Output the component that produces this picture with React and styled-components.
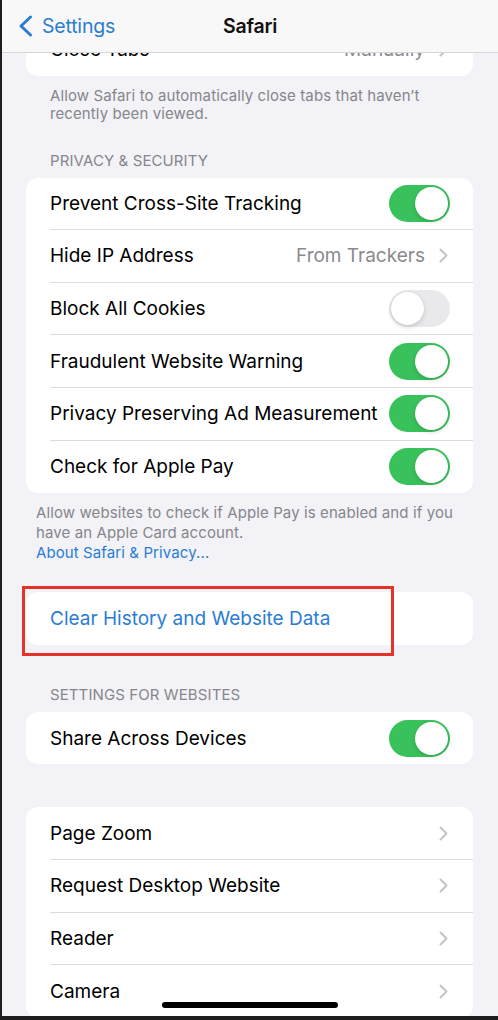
import React from "react";
import styled, { createGlobalStyle } from "styled-components";

const GlobalStyle = createGlobalStyle`
  html, body {
    margin: 0;
    padding: 0;
    background: #1e1e1f;
  }
  * {
    box-sizing: border-box;
  }
`;

const Frame = styled.div`
  width: 498px;
  height: 1020px;
  padding-left: 2px;
  padding-bottom: 4px;
  background: #1e1e1f;
`;

const Screen = styled.div`
  position: relative;
  height: 100%;
  display: flex;
  flex-direction: column;
  overflow: hidden;
  background: #f2f2f7;
  font-family: Inter, "Noto Sans", sans-serif;
  -webkit-font-smoothing: antialiased;
`;

const NavBar = styled.div`
  flex: none;
  position: relative;
  z-index: 2;
  height: 53px;
  display: flex;
  align-items: center;
  justify-content: center;
  background: #f8f8f8;
  border-bottom: 1px solid #d6d6d8;
`;

const BackButton = styled.div`
  position: absolute;
  left: 16px;
  top: 0;
  bottom: 0;
  display: flex;
  align-items: center;
  gap: 9px;
  color: #2a7dd3;
  font-size: 19.5px;
  letter-spacing: -0.2px;
`;

const Title = styled.div`
  font-size: 19.5px;
  font-weight: 600;
  color: #111;
  letter-spacing: -0.2px;
`;

const Scroller = styled.div`
  flex: 1;
  overflow: hidden;
`;

const Content = styled.div`
  margin-top: -30px;
`;

const Card = styled.div`
  margin: ${(p) => p.$top || 0}px 25px 0 24px;
  background: #fff;
  border-radius: 12px;
  overflow: hidden;
`;

const Row = styled.div`
  display: flex;
  align-items: center;
  min-height: 52.6px;
  margin-left: 24px;
  padding-right: 23px;
  border-bottom: 1px solid #dcdcde;
  &:last-child {
    border-bottom: none;
  }
`;

const Label = styled.div`
  flex: 1;
  font-size: 19px;
  color: ${(p) => (p.$link ? "#2a7dd3" : "#000")};
`;

const Value = styled.div`
  font-size: 19px;
  color: #8a8a8e;
  margin-right: 14px;
`;

const Footer = styled.div`
  padding: ${(p) => p.$top}px 30px 0 ${(p) => p.$indent}px;
  font-size: 15px;
  line-height: ${(p) => p.$line}px;
  color: #86868b;
  letter-spacing: 0.1px;
`;

const FooterLink = styled.div`
  color: #2a7dd3;
`;

const SectionHeader = styled.div`
  padding: ${(p) => p.$top}px 0 0 48px;
  margin-bottom: 8px;
  font-size: 15px;
  line-height: 18px;
  color: #86868b;
  letter-spacing: 0.1px;
`;

const Highlight = styled.div`
  position: relative;
`;

const RedBox = styled.div`
  position: absolute;
  left: 20px;
  top: -6px;
  width: 372px;
  height: 70px;
  border: 3px solid #e6322a;
  pointer-events: none;
`;

const Track = styled.div`
  flex: none;
  position: relative;
  width: 61px;
  height: 37px;
  border-radius: 19px;
  background: ${(p) => (p.$on ? "#39c25c" : "#e9e9eb")};
`;

const Knob = styled.div`
  position: absolute;
  top: 2px;
  left: ${(p) => (p.$on ? "26px" : "2px")};
  width: 33px;
  height: 33px;
  border-radius: 50%;
  background: #fff;
  box-shadow: 0 2px 5px rgba(0, 0, 0, 0.15), 0 0 1px rgba(0, 0, 0, 0.1);
`;

const HomeIndicator = styled.div`
  position: absolute;
  left: 50%;
  bottom: 8px;
  width: 176px;
  height: 6px;
  margin-left: -88px;
  border-radius: 3px;
  background: #000;
  z-index: 3;
`;

const Chevron = () => (
  <svg width="9" height="15" viewBox="0 0 9 15" style={{ marginRight: 2, flex: "none" }}>
    <path d="M1.5 1.5 L7.5 7.5 L1.5 13.5" fill="none" stroke="#c4c4c7" strokeWidth="2" strokeLinecap="round" strokeLinejoin="round" />
  </svg>
);

const BackChevron = () => (
  <svg width="15" height="22" viewBox="0 0 15 22">
    <path d="M12.5 2 L3 11 L12.5 20" fill="none" stroke="#2a7dd3" strokeWidth="3" strokeLinecap="round" strokeLinejoin="round" />
  </svg>
);

const Toggle = ({ on }) => (
  <Track $on={on}>
    <Knob $on={on} />
  </Track>
);

const ToggleRow = ({ label, on }) => (
  <Row>
    <Label>{label}</Label>
    <Toggle on={on} />
  </Row>
);

const LinkRow = ({ label, value }) => (
  <Row>
    <Label>{label}</Label>
    {value && <Value>{value}</Value>}
    <Chevron />
  </Row>
);

export default function App() {
  return (
    <Frame>
      <GlobalStyle />
      <Screen>
        <NavBar>
          <BackButton>
            <BackChevron />
            Settings
          </BackButton>
          <Title>Safari</Title>
        </NavBar>
        <Scroller>
          <Content>
            <Card>
              <LinkRow label="Close Tabs" value="Manually" />
            </Card>
            <Footer $top={11} $indent={48} $line={18}>
              Allow Safari to automatically close tabs that haven’t recently been viewed.
            </Footer>

            <SectionHeader $top={29}>PRIVACY &amp; SECURITY</SectionHeader>
            <Card>
              <ToggleRow label="Prevent Cross-Site Tracking" on />
              <LinkRow label="Hide IP Address" value="From Trackers" />
              <ToggleRow label="Block All Cookies" on={false} />
              <ToggleRow label="Fraudulent Website Warning" on />
              <ToggleRow label="Privacy Preserving Ad Measurement" on />
              <ToggleRow label="Check for Apple Pay" on />
            </Card>
            <Footer $top={10} $indent={34} $line={20}>
              Allow websites to check if Apple Pay is enabled and if you have an Apple Card account.
              <FooterLink>About Safari &amp; Privacy...</FooterLink>
            </Footer>

            <Highlight>
              <Card $top={29}>
                <Row>
                  <Label $link>Clear History and Website Data</Label>
                </Row>
              </Card>
              <RedBox />
            </Highlight>

            <SectionHeader $top={41}>SETTINGS FOR WEBSITES</SectionHeader>
            <Card>
              <ToggleRow label="Share Across Devices" on />
            </Card>

            <Card $top={43}>
              <LinkRow label="Page Zoom" />
              <LinkRow label="Request Desktop Website" />
              <LinkRow label="Reader" />
              <LinkRow label="Camera" />
            </Card>
          </Content>
        </Scroller>
        <HomeIndicator />
      </Screen>
    </Frame>
  );
}
